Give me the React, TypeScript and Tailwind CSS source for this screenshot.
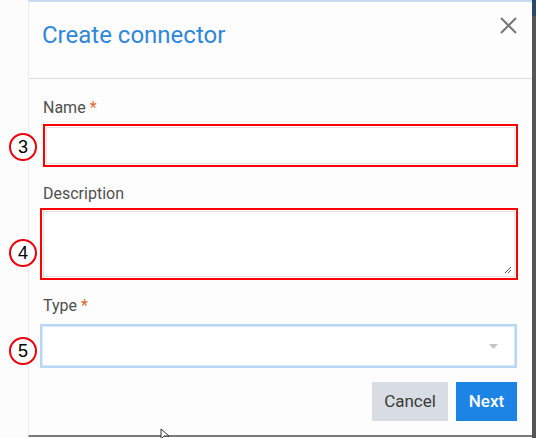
// numbered callout drawn over the left edge of the dialog
function Marker({ n, top }: { n: number; top: string }) {
  return (
    <div
      className={`absolute left-[9px] ${top} w-[28px] h-[28px] rounded-full border-2 border-[#e8000b] bg-white flex items-center justify-center text-[18px] leading-none text-black font-['Liberation_Sans',sans-serif]`}
    >
      {n}
    </div>
  );
}

function Label({ text, required }: { text: string; required?: boolean }) {
  return (
    <div className="pl-[3px] h-[20px] text-[16px] leading-[20px] text-[#4f4f4f]">
      {text}
      {required && <span className="ml-[4px] text-[#e0672f]">*</span>}
    </div>
  );
}

export default function App() {
  return (
    <div className="relative w-[536px] h-[438px] flex bg-[#fcfcfc] overflow-hidden font-['Roboto','Liberation_Sans',sans-serif]">
      <div className="w-[28px] shrink-0" />

      {/* dialog */}
      <div className="w-[504px] h-[437px] shrink-0 flex flex-col bg-[#fdfdfd] border-l border-l-[#ebebeb] border-t-2 border-t-[#c6dbef] border-b-2 border-b-[#7b7b7b]">
        <div className="h-[77px] shrink-0 flex justify-between pl-[13px] pr-[15px] border-b border-[#dedede]">
          <h1 className="pt-[18px] text-[24px] leading-[30px] text-[#2f87d8]">Create connector</h1>
          <div className="pt-[15px]">
            <svg width="17" height="17" viewBox="0 0 17 17">
              <path d="M1 1 L16 16 M16 1 L1 16" stroke="#777" strokeWidth="2" />
            </svg>
          </div>
        </div>

        <div className="flex flex-col pl-[11px] pr-[14px]">
          {/* Name */}
          <div className="mt-[19px]">
            <Label text="Name" required />
          </div>
          <div className="mt-[6px] ml-[3px] h-[43px] border-2 border-[#ff0000] p-px">
            <div className="h-full border border-[#e3e3e3] bg-[#fefefe]" />
          </div>

          {/* Description */}
          <div className="mt-[17px]">
            <Label text="Description" />
          </div>
          <div className="mt-[4px] h-[72px] border-2 border-[#ff0000] p-px">
            <div className="relative h-full border border-[#e3e3e3] bg-[#fefefe]">
              <svg className="absolute right-[2px] bottom-[2px]" width="8" height="8" viewBox="0 0 8 8">
                <path d="M7 1 L1 7 M7 4 L4 7" stroke="#555" strokeWidth="1" />
              </svg>
            </div>
          </div>

          {/* Type */}
          <div className="mt-[16px]">
            <Label text="Type" required />
          </div>
          <div className="mt-[8px] mr-px h-[44px] border-2 border-[#b9d6f2] shadow-[inset_0_0_0_1px_#d8e8f8] bg-white flex items-center justify-end pr-[17px]">
            <svg width="9" height="5" viewBox="0 0 9 5">
              <path d="M0 0 L9 0 L4.5 5 Z" fill="#c4c4c4" />
            </svg>
          </div>

          {/* actions */}
          <div className="mt-[14px] mr-px flex justify-end gap-[8px]">
            <button className="w-[76px] h-[39px] bg-[#d8dde3] text-[17px] text-[#3a3a3a]">Cancel</button>
            <button className="w-[61px] h-[39px] bg-[#1c84e4] text-[17px] font-medium text-white">Next</button>
          </div>
        </div>
      </div>

      <div className="w-[4px] shrink-0 flex flex-col bg-[#555555]">
        <div className="h-[16px] bg-[#2b4a6b]" />
      </div>

      <Marker n={3} top="top-[133px]" />
      <Marker n={4} top="top-[239px]" />
      <Marker n={5} top="top-[337px]" />

      {/* mouse pointer */}
      <svg className="absolute left-[160px] top-[428px]" width="12" height="12" viewBox="0 0 12 12">
        <path d="M1 1 L1 11 L4 8 L9 8 Z" fill="#fff" stroke="#333" strokeWidth="1" />
      </svg>
    </div>
  );
}
